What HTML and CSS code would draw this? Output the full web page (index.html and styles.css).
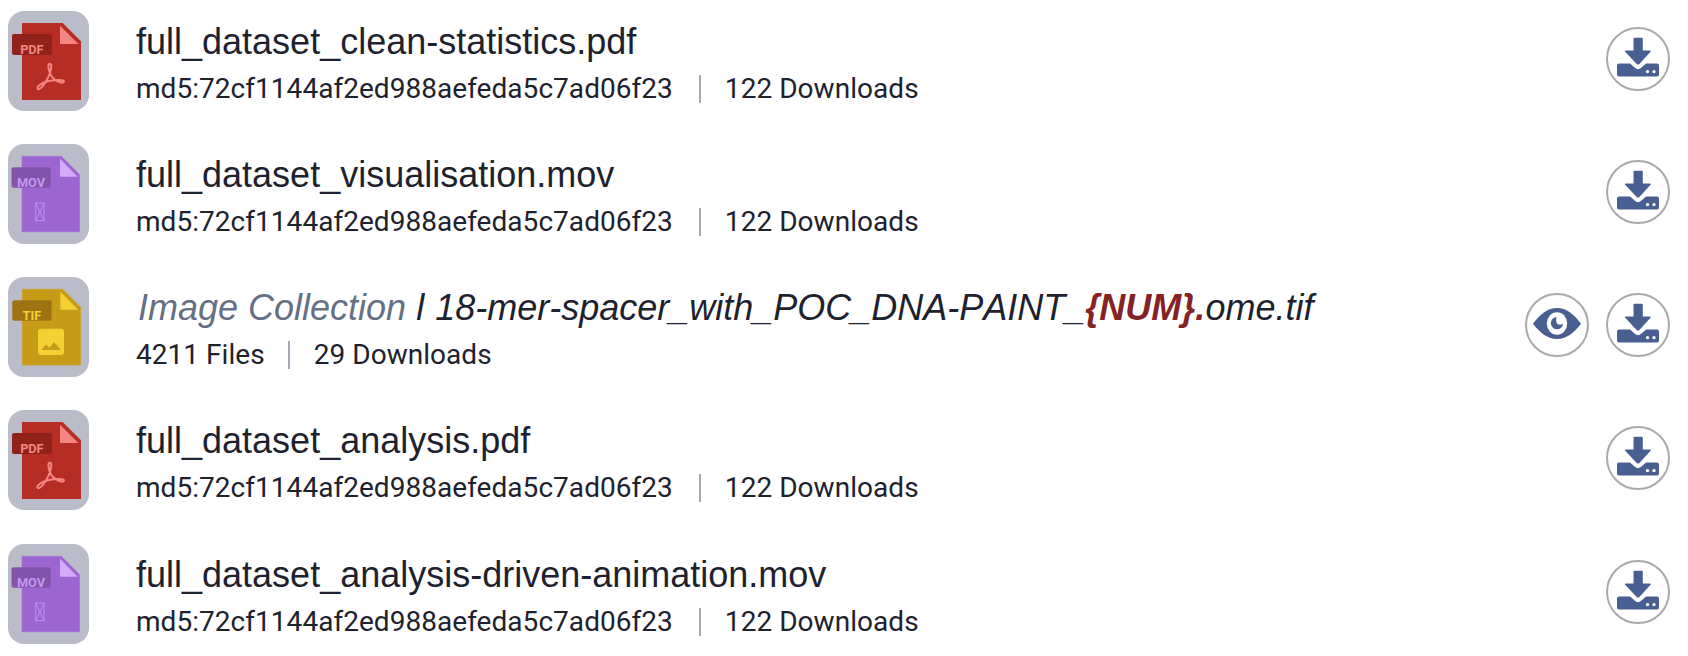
FILE: index.html
```html
<!DOCTYPE html>
<html lang="en">
<head>
<meta charset="utf-8">
<title>Files</title>
<link rel="stylesheet" href="styles.css">
</head>
<body>
<svg class="sprite" aria-hidden="true">
  <symbol id="pdf" viewBox="0 0 81 100">
    <path d="M14 12H54.7L73 30.3V89H14Z" fill="#b62d25"/>
    <path d="M52 14.7V33H70.5Z" fill="#f38683"/>
    <rect x="4" y="23" width="40" height="21" rx="2" fill="#90221b"/>
    <path d="M29.7 77.8C28.2 76 32.8 71.8 40 70.2C47 68.6 55.8 68.3 56 70.4C56.2 73.5 47.6 70.6 44 65.8C40.6 61.3 39.2 53.2 41.6 52.7C44.6 52.2 43.3 59.2 40.3 66.2C37.6 72.2 31.5 80 29.7 77.8Z" fill="none" stroke="#f38683" stroke-width="2"/>
  </symbol>
  <symbol id="mov" viewBox="0 0 81 100">
    <path d="M14 12.3H53.3L71.5 30.5V87.8H14Z" fill="#9d65d0" stroke="#a873d8" stroke-width=".7"/>
    <path d="M52 14.7V32.7H69.5Z" fill="#d5aafa"/>
    <rect x="3.5" y="23.3" width="39.2" height="20.4" rx="2" fill="#8255ab"/>
    <path d="M27.7 59H36V76.5H27.7ZL36 76.5M36 59L27.7 76.5" fill="none" stroke="#c795f3" stroke-width=".8"/>
  </symbol>
  <symbol id="tif" viewBox="0 0 81 100">
    <path d="M14.3 12.3H54.7L72.7 30.3V88H14.3Z" fill="#c69b17" stroke="#cca322" stroke-width=".7"/>
    <path d="M52.3 14.7V32.7H70.3Z" fill="#f3d132"/>
    <rect x="4.3" y="23.3" width="39.4" height="20.4" rx="2" fill="#9e7413"/>
    <rect x="30" y="51.8" width="26" height="26.2" rx="3" fill="#f3d132"/>
    <path d="M33.3 73L38 67.3L41.3 70.7L46 65L53 73Z" fill="#c69b17"/>
  </symbol>
  <symbol id="download" viewBox="0 0 60 60">
    <path d="M26.5 8.7H33.8Q34.8 8.7 34.8 9.7V21.5H41.7Q43.7 21.5 42.3 23.1L31.4 34.9Q30 36.1 28.7 34.9L17.4 23.1Q16 21.5 18 21.5H25.5V9.7Q25.5 8.7 26.5 8.7Z"/>
    <path fill-rule="evenodd" d="M11 34.6H22L26.9 38.7Q30 41.6 33.1 38.7L38.1 34.6H49Q51 34.6 51 36.6V45.6Q51 47.6 49 47.6H11Q9 47.6 9 45.6V36.6Q9 34.6 11 34.6ZM37.8 42.6a1.7 1.7 0 1 0 3.4 0a1.7 1.7 0 1 0-3.4 0ZM44.3 42.6a1.7 1.7 0 1 0 3.4 0a1.7 1.7 0 1 0-3.4 0Z"/>
  </symbol>
  <symbol id="eye" viewBox="0 0 60 60">
    <path d="M6 28.7C12 20.7 20 13 30 13S48 20.7 54 28.7C48 36.7 40 44 30 44S12 36.7 6 28.7Z"/>
    <ellipse cx="30" cy="28.5" rx="10.2" ry="11.3" fill="#fff"/>
    <path d="M28.2 22.2C25 23.2 23.9 25.7 23.9 28.7A6.1 6.4 0 0 0 36 28.7Q32 30.9 29.8 28.2Q28.2 25.7 29.6 22Z"/>
  </symbol>
</svg>
<main class="files">
  <article class="file">
    <div class="thumb"><svg><use href="#pdf"/><text class="ext pdf" x="12.2" y="43">PDF</text></svg></div>
    <div class="info"><h2>full_dataset_clean-statistics.pdf</h2><p><span>md5:72cf1144af2ed988aefeda5c7ad06f23</span><span>122 Downloads</span></p></div>
    <div class="actions"><button aria-label="Download"><svg><use href="#download"/></svg></button></div>
  </article>
  <article class="file">
    <div class="thumb"><svg><use href="#mov"/><text class="ext mov" x="9" y="43.3">MOV</text></svg></div>
    <div class="info"><h2>full_dataset_visualisation.mov</h2><p><span>md5:72cf1144af2ed988aefeda5c7ad06f23</span><span>122 Downloads</span></p></div>
    <div class="actions"><button aria-label="Download"><svg><use href="#download"/></svg></button></div>
  </article>
  <article class="file group">
    <div class="thumb"><svg><use href="#tif"/><text class="ext tif" x="14.6" y="43.3">TIF</text></svg></div>
    <div class="info"><h2 class="collection"><span class="kind">Image Collection</span> <span class="divider">l</span> 18-mer-spacer_with_POC_DNA-PAINT_<b>{NUM}.</b>ome.tif</h2><p><span>4211 Files</span><span>29 Downloads</span></p></div>
    <div class="actions"><button aria-label="Preview"><svg><use href="#eye"/></svg></button><button aria-label="Download"><svg><use href="#download"/></svg></button></div>
  </article>
  <article class="file">
    <div class="thumb"><svg><use href="#pdf"/><text class="ext pdf" x="12.2" y="43">PDF</text></svg></div>
    <div class="info"><h2>full_dataset_analysis.pdf</h2><p><span>md5:72cf1144af2ed988aefeda5c7ad06f23</span><span>122 Downloads</span></p></div>
    <div class="actions"><button aria-label="Download"><svg><use href="#download"/></svg></button></div>
  </article>
  <article class="file">
    <div class="thumb"><svg><use href="#mov"/><text class="ext mov" x="9" y="43.3">MOV</text></svg></div>
    <div class="info"><h2>full_dataset_analysis-driven-animation.mov</h2><p><span>md5:72cf1144af2ed988aefeda5c7ad06f23</span><span>122 Downloads</span></p></div>
    <div class="actions"><button aria-label="Download"><svg><use href="#download"/></svg></button></div>
  </article>
</main>
</body>
</html>
```
FILE: styles.css
```css
* { box-sizing: border-box; }
body { margin: 0; background: #fff; color: #1e222e; font-family: Roboto, sans-serif; overflow: hidden; }
.sprite { display: none; }
.files { display: flex; flex-direction: column; gap: 33px; padding: 11px 18px 0 8px; }
.file { display: flex; height: 100px; }
.file:last-child { margin-top: 1px; }
.thumb { flex: none; width: 81px; height: 100px; border-radius: 16px; background: #babdc9; }
.thumb svg { display: block; width: 81px; height: 100px; }
.ext { font: 700 12.7px Roboto, sans-serif; }
.ext.pdf { fill: #f38683; }
.ext.mov { fill: #c795f3; }
.ext.tif { fill: #f3d132; }
.info { flex: 1; margin-left: 47px; padding-top: 10px; }
h2 { margin: 0; font: 400 36px/42px "Liberation Sans", Arial, sans-serif; white-space: pre; }
.collection { padding-left: 2px; font-style: italic; font-kerning: none; }
.divider { margin-right: 1px; }
.kind { color: #667085; }
b { color: #842225; }
p { display: flex; align-items: center; margin: 10px 0 0; font-size: 28px; line-height: 32px; letter-spacing: .04px; white-space: nowrap; }
p span + span { margin-left: 26px; display: flex; align-items: center; }
.group p span + span { margin-left: 23px; }
p span + span::before { content: ""; width: 2px; height: 28px; margin-right: 24px; background: #a1a9b5; }
.actions { display: flex; gap: 17px; padding-top: 16px; }
button { width: 64px; height: 64px; padding: 0; border: 2px solid #aaa; border-radius: 50%; background: #fff; }
button svg { display: block; width: 60px; height: 60px; fill: #495f92; }
```
